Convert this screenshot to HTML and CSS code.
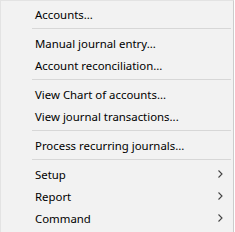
FILE: index.html
```html
<!DOCTYPE html>
<html lang="en">
  <head>
    <meta charset="UTF-8" />
    <title>Menu</title>
    <link rel="stylesheet" href="styles.css">
  </head>
  <body>
    <div class="menu">
      <div class="item">Accounts...</div>
      <div class="sep"></div>
      <div class="item">Manual journal entry...</div>
      <div class="item">Account reconciliation...</div>
      <div class="sep"></div>
      <div class="item">View Chart of accounts...</div>
      <div class="item">View journal transactions...</div>
      <div class="sep"></div>
      <div class="item">Process recurring journals...</div>
      <div class="sep"></div>
      <div class="item sub">Setup
        <svg class="chev" width="5" height="8" viewBox="0 0 5 8"><path d="M0.5 0.5 L4 4 L0.5 7.5" fill="none" stroke="#444" stroke-width="1.1"/></svg>
      </div>
      <div class="item sub">Report
        <svg class="chev" width="5" height="8" viewBox="0 0 5 8"><path d="M0.5 0.5 L4 4 L0.5 7.5" fill="none" stroke="#444" stroke-width="1.1"/></svg>
      </div>
      <div class="item sub">Command
        <svg class="chev" width="5" height="8" viewBox="0 0 5 8"><path d="M0.5 0.5 L4 4 L0.5 7.5" fill="none" stroke="#444" stroke-width="1.1"/></svg>
      </div>
    </div>
  </body>
</html>
```

FILE: styles.css
```css
html,
body {
  margin: 0;
  padding: 0;
  background: #fff;
}

.menu {
  display: flex;
  flex-direction: column;
  width: 232px;
  height: 228px;
  padding: 2px 0 1px 0;
  background: #f2f2f2;
  border: 1px solid #cccccc;
  border-top-color: #e3e3e3;
  border-left-color: #e3e3e3;
  font-family: "Noto Sans", sans-serif;
  font-size: 11.4px;
  color: #000;
}

.menu .item {
  display: flex;
  align-items: center;
  justify-content: space-between;
  height: 22px;
  padding: 0 10px 0 34px;
  white-space: nowrap;
}

.menu .sep {
  height: 1px;
  margin: 3px 2px 3px 31px;
  background: #d7d7d7;
}

.menu .chev {
  display: block;
}
```
